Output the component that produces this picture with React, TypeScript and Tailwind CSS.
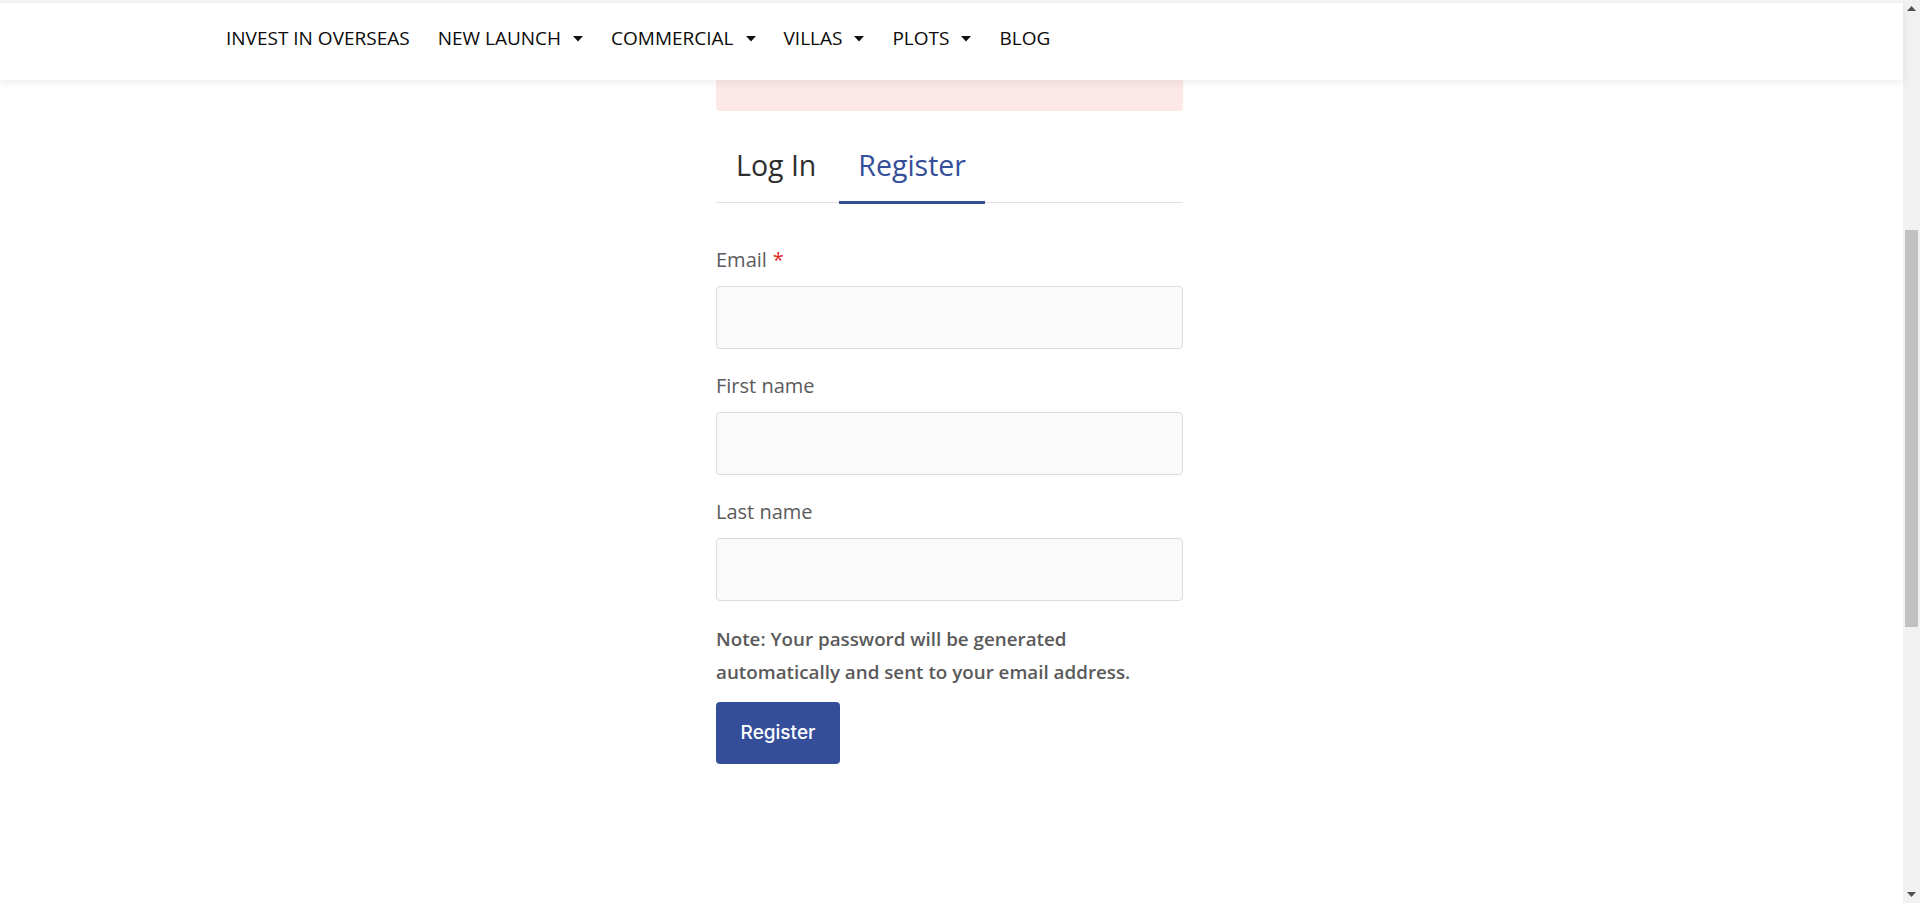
import React from 'react';

const navItems: { label: string; dropdown: boolean }[] = [
  { label: 'INVEST IN OVERSEAS', dropdown: false },
  { label: 'NEW LAUNCH', dropdown: true },
  { label: 'COMMERCIAL', dropdown: true },
  { label: 'VILLAS', dropdown: true },
  { label: 'PLOTS', dropdown: true },
  { label: 'BLOG', dropdown: false },
];

const Caret = () => (
  <svg width="10" height="6" viewBox="0 0 10 6" className="ml-[12px]">
    <path d="M0 0 H10 L5 5.5 Z" fill="#111" />
  </svg>
);

const Field = ({ label, required }: { label: string; required?: boolean }) => (
  <div className="mb-[23px] flex flex-col">
    <label className="mb-[12px] text-[20px] leading-[28px] text-[#5b5b5b]">
      {label}
      {required && <span className="ml-[6px] text-[#e2261c]">*</span>}
    </label>
    <input
      type="text"
      className="h-[63px] w-full rounded-[4px] border border-[#dcdcdc] bg-[#fafafa] px-4 outline-none"
    />
  </div>
);

// classic chrome-ish scrollbar drawn on the right edge
const Scrollbar = () => (
  <div className="flex h-[903px] w-[17px] shrink-0 flex-col bg-[#f1f1f1]">
    <div className="flex h-[17px] items-center justify-center">
      <svg width="9" height="5" viewBox="0 0 9 5">
        <path d="M0 5 L4.5 0 L9 5 Z" fill="#505050" />
      </svg>
    </div>
    <div className="flex flex-1 flex-col px-[2px]">
      <div className="h-[213px]" />
      <div className="h-[397px] bg-[#c1c1c1]" />
    </div>
    <div className="flex h-[17px] items-center justify-center">
      <svg width="9" height="5" viewBox="0 0 9 5">
        <path d="M0 0 L9 0 L4.5 5 Z" fill="#505050" />
      </svg>
    </div>
  </div>
);

export default function App() {
  return (
    <div className="flex h-[903px] w-full overflow-hidden bg-white" style={{ fontFamily: '"Open Sans", "Noto Sans", sans-serif' }}>
      <div className="flex min-w-0 flex-1 flex-col">
        <div className="h-[3px] bg-[#f4f4f4]" />

        {/* Header */}
        <header className="relative z-10 flex h-[77px] items-center bg-white pb-[6px] pl-[226px] shadow-[0_3px_8px_rgba(0,0,0,0.07)]">
          <nav className="flex items-center gap-[28px]">
            {navItems.map((item) => (
              <a key={item.label} className="flex items-center text-[19px] font-medium text-[#0a0a0a]">
                {item.label}
                {item.dropdown && <Caret />}
              </a>
            ))}
          </nav>
        </header>

        {/* Account form */}
        <main className="flex justify-center pr-[4px]">
          <div className="w-[467px]">
            <div className="h-[31px] rounded-b-[4px] bg-[#fde8e8]" />

            <div className="mt-[24px] flex border-b border-[#e0e0e0]">
              <button className="-mb-[2px] border-b-[3px] border-transparent pb-[18px] pl-[20px] pr-[23px] pt-[12px] text-[28.5px] leading-[36px] text-[#2e2e2e]">
                Log In
              </button>
              <button className="-mb-[2px] border-b-[3px] border-[#344e9a] px-[19px] pb-[18px] pt-[12px] text-[28.5px] leading-[36px] text-[#344e9a]">
                Register
              </button>
            </div>

            <form className="mt-[43px] flex flex-col">
              <Field label="Email" required />
              <Field label="First name" />
              <Field label="Last name" />

              <p className="-mt-[1px] text-[18.8px] font-semibold leading-[33px] text-[#5a5a5a]">
                Note: Your password will be generated automatically and sent to your email address.
              </p>

              <div className="mt-[13px]">
                <button
                  type="button"
                  className="h-[62px] w-[124px] rounded-[4px] bg-[#344e9a] text-[19px] font-medium text-white"
                  style={{ fontFamily: 'Inter, "Noto Sans", sans-serif' }}
                >
                  Register
                </button>
              </div>
            </form>
          </div>
        </main>
      </div>
      <Scrollbar />
    </div>
  );
}
